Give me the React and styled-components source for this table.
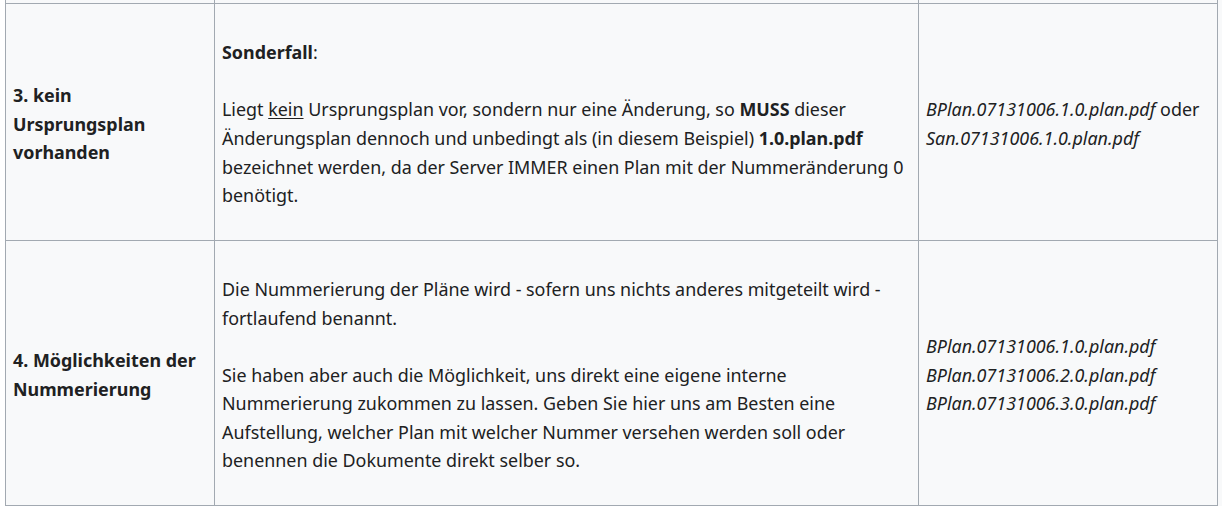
import React from "react";
import styled, { createGlobalStyle } from "styled-components";

const GlobalStyle = createGlobalStyle`
  html, body {
    margin: 0;
    padding: 0;
    background: #ffffff;
  }
  body {
    font-family: "Noto Sans", "Open Sans", sans-serif;
    color: #202122;
  }
`;

const Page = styled.div`
  padding-left: 5px;
  width: 1222px;
  height: 507px;
  overflow: hidden;
  box-sizing: border-box;
`;

const Table = styled.div`
  display: grid;
  grid-template-columns: 209px 704px 300px;
  grid-template-rows: 3px 237px 266px;
  background: #f8f9fa;
  font-size: 17.9px;
  line-height: 28.6px;
`;

const Cell = styled.div`
  display: flex;
  flex-direction: column;
  justify-content: center;
  box-sizing: border-box;
  padding: ${p => (p.$clipped ? "0 7px" : "4px 7px 0")};
  border-left: 1px solid #a2a9b1;
  border-top: ${p => (p.$clipped ? "none" : "1px solid #a2a9b1")};
  border-right: ${p => (p.$last ? "1px solid #a2a9b1" : "none")};
  border-bottom: ${p => (p.$bottom ? "1px solid #a2a9b1" : "none")};
  font-weight: ${p => (p.$head ? 700 : 400)};
  min-width: 0;
`;

const Text = styled.div`
  margin: 0;
`;

const Under = styled.span`
  text-decoration: underline;
  text-underline-offset: 2px;
`;

const File = styled.i`
  font-style: italic;
`;

const rows = [
  {
    head: (
      <>
        3. kein
        <br />
        Ursprungsplan
        <br />
        vorhanden
      </>
    ),
    body: (
      <>
        <b>Sonderfall</b>:
        <br />
        <br />
        Liegt <Under>kein</Under> Ursprungsplan vor, sondern nur eine Änderung, so <b>MUSS</b> dieser
        Änderungsplan dennoch und unbedingt als (in diesem Beispiel) <b>1.0.plan.pdf</b> bezeichnet
        werden, da der Server IMMER einen Plan mit der Nummeränderung 0 benötigt.
      </>
    ),
    files: (
      <>
        <File>BPlan.07131006.1.0.plan.pdf</File> oder <File>San.07131006.1.0.plan.pdf</File>
      </>
    ),
  },
  {
    head: <>4. Möglichkeiten der Nummerierung</>,
    body: (
      <>
        Die Nummerierung der Pläne wird - sofern uns nichts anderes mitgeteilt wird - fortlaufend
        benannt.
        <br />
        <br />
        Sie haben aber auch die Möglichkeit, uns direkt eine eigene interne Nummerierung zukommen
        zu lassen. Geben Sie hier uns am Besten eine Aufstellung, welcher Plan mit welcher Nummer
        versehen werden soll oder benennen die Dokumente direkt selber so.
      </>
    ),
    files: (
      <>
        <File>BPlan.07131006.1.0.plan.pdf</File>
        <br />
        <File>BPlan.07131006.2.0.plan.pdf</File>
        <br />
        <File>BPlan.07131006.3.0.plan.pdf</File>
      </>
    ),
  },
];

export default function App() {
  return (
    <Page>
      <GlobalStyle />
      <Table>
        <Cell $clipped />
        <Cell $clipped />
        <Cell $clipped $last />
        {rows.map((r, i) => {
          const bottom = i === rows.length - 1;
          return (
            <React.Fragment key={i}>
              <Cell $head $bottom={bottom}>
                <Text>{r.head}</Text>
              </Cell>
              <Cell $bottom={bottom}>
                <Text>{r.body}</Text>
              </Cell>
              <Cell $last $bottom={bottom}>
                <Text>{r.files}</Text>
              </Cell>
            </React.Fragment>
          );
        })}
      </Table>
    </Page>
  );
}
